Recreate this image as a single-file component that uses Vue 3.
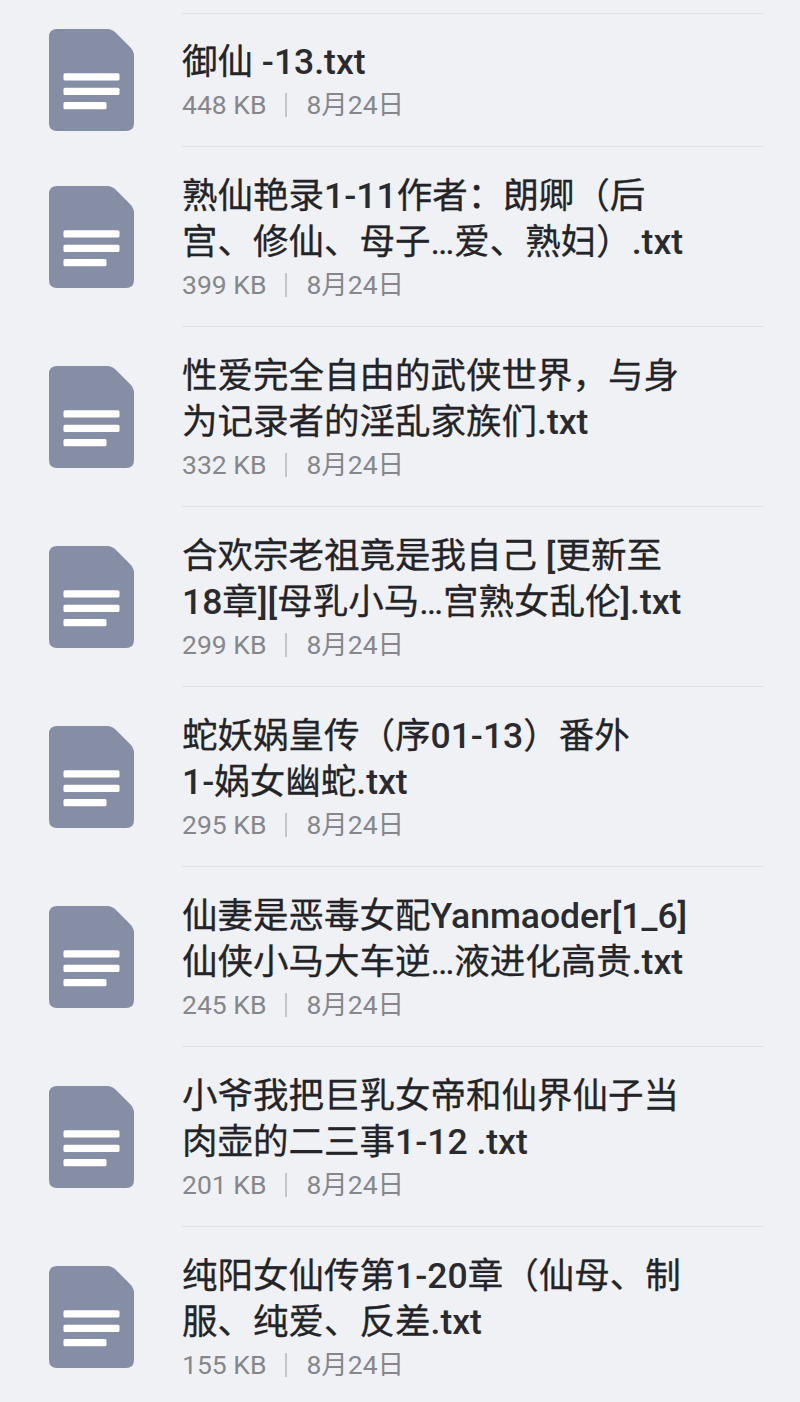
<script setup>
const files = [
  { lines: ['御仙 -13.txt'], size: '448 KB' },
  { lines: ['熟仙艳录1-11作者：朗卿（后', '宫、修仙、母子…爱、熟妇）.txt'], size: '399 KB' },
  { lines: ['性爱完全自由的武侠世界，与身', '为记录者的淫乱家族们.txt'], size: '332 KB' },
  { lines: ['合欢宗老祖竟是我自己 [更新至', '18章][母乳小马…宫熟女乱伦].txt'], size: '299 KB' },
  { lines: ['蛇妖娲皇传（序01-13）番外', '1-娲女幽蛇.txt'], size: '295 KB' },
  { lines: ['仙妻是恶毒女配Yanmaoder[1_6]', '仙侠小马大车逆…液进化高贵.txt'], size: '245 KB' },
  { lines: ['小爷我把巨乳女帝和仙界仙子当', '肉壶的二三事1-12 .txt'], size: '201 KB' },
  { lines: ['纯阳女仙传第1-20章（仙母、制', '服、纯爱、反差.txt'], size: '155 KB' },
]
const runs = (line) => line.match(/[\x20-\x7e]+|[^\x20-\x7e]+/g).map((text) => ({ text, latin: /^[\x20-\x7e]/.test(text) }))
</script>

<template>
  <main class="page">
    <ul class="list">
      <li v-for="f in files" :key="f.size" class="row">
        <svg class="icon" viewBox="0 0 85 102" width="85" height="102">
          <path d="M8 0H58Q63 0 66.500 3.500L81 18Q85 22 85 27V94Q85 102 77 102H8Q0 102 0 94V8Q0 0 8 0Z" fill="#868ea6" />
          <rect x="14.500" y="44.300" width="56" height="7.300" rx="1.500" fill="#fff" />
          <rect x="14.500" y="58.700" width="56" height="7.300" rx="1.500" fill="#fff" />
          <rect x="14.500" y="73" width="43" height="7.300" rx="1.500" fill="#fff" />
        </svg>
        <div class="body">
          <div class="title">
            <div v-for="l in f.lines" :key="l" class="line"><span v-for="(r, i) in runs(l)" :key="i" :class="{ latin: r.latin }">{{ r.text }}</span></div>
          </div>
          <div class="meta">
            <span>{{ f.size }}</span>
            <i class="sep"></i>
            <span>8月24日</span>
          </div>
        </div>
      </li>
    </ul>
  </main>
</template>

<style>
html, body { margin: 0; background: #f0f1f5; }
</style>

<style scoped>
.page {
  width: 800px;
  height: 1402px;
  overflow: hidden;
  background: #f0f1f5;
  font-family: Roboto, "Noto Sans CJK SC", sans-serif;
  padding-top: 13px;
  box-sizing: border-box;
}
.list { list-style: none; margin: 0; padding: 0; }
.row {
  display: flex;
  align-items: center;
  padding-left: 48.500px;
}
.icon { flex: none; margin: 2px 48.500px 0 0; }
.row:first-child .icon { margin-top: 0; }
.body {
  width: 582px;
  border-top: 1px solid #e1e2e6;
  padding: 26px 0 21px;
  box-sizing: border-box;
}
.row:first-child .body { padding-top: 25px; }
.line {
  font-size: 35.5px;
  line-height: 46px;
  color: #232427;
  white-space: nowrap;
  -webkit-text-stroke: 0.3px #232427;
}
.latin { font-weight: 500; color: #2a2b2e; -webkit-text-stroke: 0; }
.meta {
  display: flex;
  align-items: center;
  font-size: 26.5px;
  line-height: 40px;
  color: #85878b;
}
.sep {
  width: 2px;
  height: 24px;
  margin: 0 19px;
  background: #c4c5c9;
}
</style>
